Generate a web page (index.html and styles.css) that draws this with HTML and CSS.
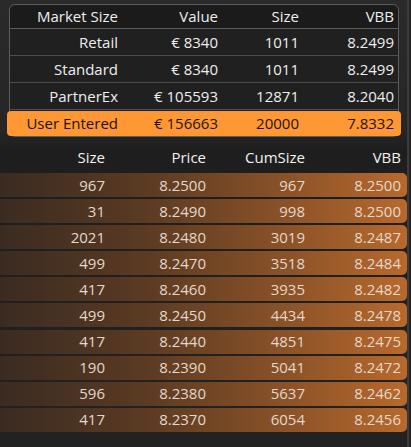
FILE: index.html
```html
<!DOCTYPE html>
<html>
<head>
<meta charset="utf-8">
<link rel="stylesheet" href="styles.css">
</head>
<body>
<div class="page">
  <div class="summary">
    <div class="srow shead">
      <div>Market Size</div><div>Value</div><div>Size</div><div>VBB</div>
    </div>
    <div class="srow">
      <div>Retail</div><div>€ 8340</div><div>1011</div><div>8.2499</div>
    </div>
    <div class="srow">
      <div>Standard</div><div>€ 8340</div><div>1011</div><div>8.2499</div>
    </div>
    <div class="srow">
      <div>PartnerEx</div><div>€ 105593</div><div>12871</div><div>8.2040</div>
    </div>
    <div class="srow user">
      <div>User Entered</div><div>€ 156663</div><div>20000</div><div>7.8332</div>
    </div>
  </div>
  <div class="book">
    <div class="brow bhead">
      <div>Size</div><div>Price</div><div>CumSize</div><div>VBB</div>
    </div>
    <div class="brow"><div>967</div><div>8.2500</div><div>967</div><div>8.2500</div></div>
    <div class="brow"><div>31</div><div>8.2490</div><div>998</div><div>8.2500</div></div>
    <div class="brow"><div>2021</div><div>8.2480</div><div>3019</div><div>8.2487</div></div>
    <div class="brow"><div>499</div><div>8.2470</div><div>3518</div><div>8.2484</div></div>
    <div class="brow"><div>417</div><div>8.2460</div><div>3935</div><div>8.2482</div></div>
    <div class="brow"><div>499</div><div>8.2450</div><div>4434</div><div>8.2478</div></div>
    <div class="brow"><div>417</div><div>8.2440</div><div>4851</div><div>8.2475</div></div>
    <div class="brow"><div>190</div><div>8.2390</div><div>5041</div><div>8.2472</div></div>
    <div class="brow"><div>596</div><div>8.2380</div><div>5637</div><div>8.2462</div></div>
    <div class="brow"><div>417</div><div>8.2370</div><div>6054</div><div>8.2456</div></div>
  </div>
</div>
</body>
</html>
```

FILE: styles.css
```css
html, body {
  margin: 0;
  padding: 0;
  background: #262626;
}

.page {
  width: 409px;
  height: 447px;
  border-right: 2px solid #3a3a3a;
  font-family: "Open Sans", "Noto Sans", sans-serif;
  font-size: 15px;
  color: #eeeeee;
  background: linear-gradient(to bottom, #2a2a2a 0px, #262626 130px, #1e1e1e 150px, #222222 447px);
  padding-top: 4px;
  box-sizing: border-box;
  overflow: hidden;
}

.summary {
  margin-left: 9px;
  width: 390px;
  border: 1px solid #5c5c5c;
  border-radius: 6px;
  background: #202020;
  box-sizing: border-box;
}

.srow {
  display: grid;
  grid-template-columns: 112px 100px 81px 1fr;
  height: 27px;
  align-items: center;
  border-bottom: 1px solid #4d4d4d;
  box-sizing: border-box;
  line-height: 1;
}

.srow > div {
  text-align: right;
  padding-right: 4px;
}

.shead {
  height: 24px;
  border-bottom: 1px solid #5c5c5c;
  background: #1b1b1b;
  border-radius: 6px 6px 0 0;
}

.srow.user {
  border-bottom: none;
  background: #ff9735;
  color: #1c1410;
  height: 25px;
  margin: 1px -3px 0 -3px;
  border-radius: 4px;
  padding: 0 3px;
}

.book {
  margin-top: 3px;
}

.brow {
  display: grid;
  grid-template-columns: 109px 101px 99px 1fr;
  height: 24px;
  margin-bottom: 2.1px;
  align-items: center;
  width: 407px;
  border-radius: 0 5px 5px 0;
  background: linear-gradient(to right, #3a2b21 0%, #5a3a22 35%, #8a5228 70%, #b8692c 100%);
  color: #e3d8cc;
  line-height: 1;
}

.brow > div {
  text-align: right;
  padding-right: 4px;
}

.brow > div:last-child {
  padding-right: 6px;
}

.bhead {
  background: none;
  color: #f2f2f2;
  height: 30px;
  align-items: end;
  padding-bottom: 5px;
  box-sizing: border-box;
  margin-bottom: 3px;
}
```
